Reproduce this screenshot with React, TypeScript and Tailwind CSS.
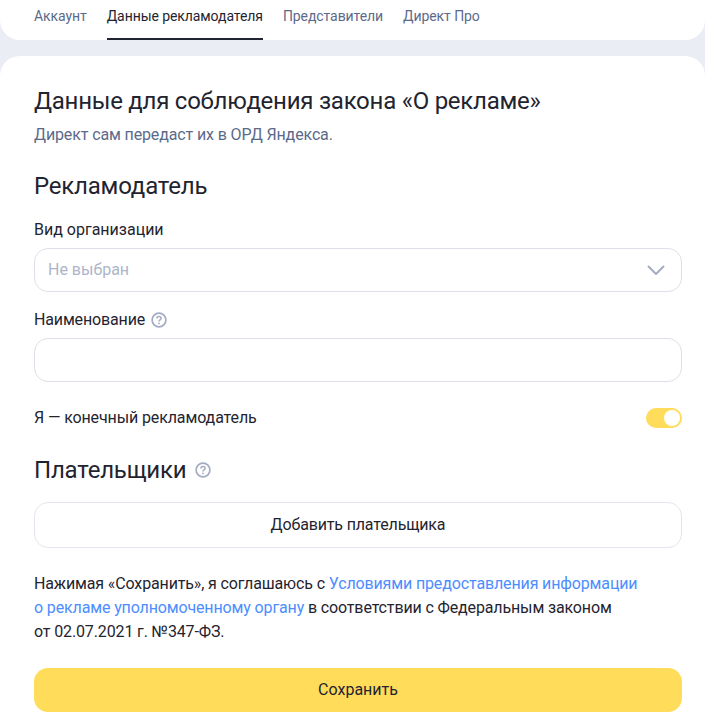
const QuestionIcon = ({ size }: { size: number }) => (
  <svg width={size} height={size} viewBox="0 0 16 16" fill="none" className="shrink-0">
    <circle cx="8" cy="8" r="6.9" stroke="#a3acc2" strokeWidth="1.7" />
    <path d="M5.9 6.4c0-1.2.9-2 2.1-2s2.1.8 2.1 1.9c0 1.7-2.1 1.6-2.1 3.2" stroke="#a3acc2" strokeWidth="1.5" />
    <circle cx="8" cy="11.4" r="0.9" fill="#a3acc2" />
  </svg>
);

const tabs = ["Аккаунт", "Данные рекламодателя", "Представители", "Директ Про"];

export default function App() {
  return (
    <div className="h-[720px] overflow-hidden bg-[#ebedf5] font-['Roboto',sans-serif] text-[#1f2430]">
      <nav className="flex h-[40px] gap-[20px] rounded-b-[20px] bg-white px-[34px]">
        {tabs.map((tab, i) => (
          <div
            key={tab}
            className={`h-[40px] pt-[6px] text-[14px] leading-[20px] tracking-[-0.08px] ${
              i === 1 ? "border-b-2 border-[#1f2430] text-[#1f2430]" : "text-[#5c6a8a]"
            }`}
          >
            {tab}
          </div>
        ))}
      </nav>

      <main className="mt-[16px] h-[664px] rounded-t-[20px] bg-white pl-[34px] pr-[23px] pt-[30px]">
        <h1 className="text-[24px] leading-[30px] tracking-[-0.25px]">Данные для соблюдения закона «О рекламе»</h1>
        <p className="mt-[9px] text-[16px] leading-[20px] tracking-[-0.13px] text-[#5c6a8a]">Директ сам передаст их в ОРД Яндекса.</p>

        <h2 className="mt-[26px] text-[24px] leading-[30px] tracking-[-0.2px]">Рекламодатель</h2>

        <label className="mt-[19px] block text-[16px] leading-[20px]">Вид организации</label>
        <div className="mt-[8px] flex h-[44px] items-center justify-between rounded-[14px] border border-[#dde0ea] pl-[13px] pr-[16px]">
          <span className="text-[16px] text-[#adb5ca]">Не выбран</span>
          <svg width="18" height="10" viewBox="0 0 18 10" fill="none">
            <path d="M1 1l8 8 8-8" stroke="#a3acc2" strokeWidth="2" />
          </svg>
        </div>

        <div className="mt-[18px] flex items-center gap-[6px] text-[16px] leading-[20px] tracking-[-0.15px]">
          Наименование
          <QuestionIcon size={16} />
        </div>
        <div className="mt-[8px] h-[44px] rounded-[14px] border border-[#dde0ea]" />

        <div className="mt-[26px] flex items-center justify-between">
          <span className="text-[16px] leading-[20px] tracking-[-0.12px]">Я — конечный рекламодатель</span>
          <div className="flex h-[20px] w-[36px] items-center justify-end rounded-full bg-[#ffdc5a] pr-[2px]">
            <div className="size-[16px] rounded-full bg-white" />
          </div>
        </div>

        <div className="mt-[27px] flex items-center gap-[9px] text-[24px] leading-[30px] tracking-[-0.2px]">
          Плательщики
          <QuestionIcon size={16} />
        </div>

        <button className="mt-[17px] block h-[46px] w-full rounded-[14px] border border-[#e4e6ef] text-[16px] tracking-[-0.15px]">
          Добавить плательщика
        </button>

        <p className="mt-[24px] text-[16px] leading-[24px] tracking-[-0.135px]">
          Нажимая «Сохранить», я соглашаюсь с <a className="text-[#4c8dff]">Условиями предоставления информации</a>
          <br />
          <a className="text-[#4c8dff]">о рекламе уполномоченному органу</a> в соответствии с Федеральным законом
          <br />
          от 02.07.2021 г. №347-ФЗ.
        </p>

        <button className="mt-[24px] block h-[44px] w-full rounded-[14px] bg-[#ffdc5a] text-[16px]">Сохранить</button>
      </main>
    </div>
  );
}
